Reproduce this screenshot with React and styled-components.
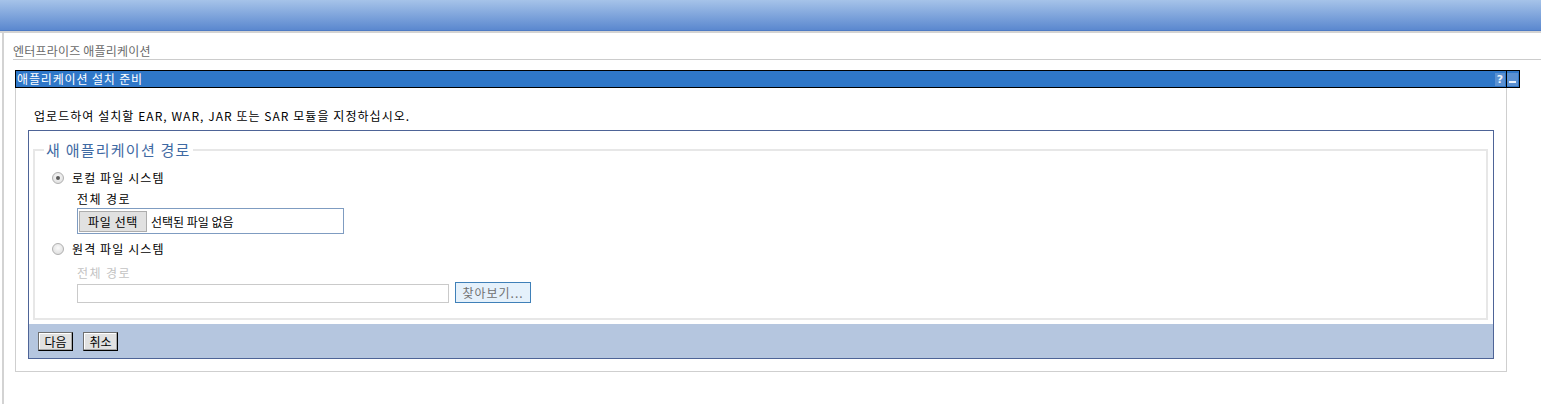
import React from "react";
import styled, { createGlobalStyle } from "styled-components";

const GlobalStyle = createGlobalStyle`
  html, body { margin: 0; padding: 0; background: #fff; }
  body {
    font-family: "Noto Sans CJK KR", "Noto Sans", sans-serif;
    font-size: 12px;
    color: #000;
  }
  * { box-sizing: border-box; }
`;

const TopBar = styled.div`
  height: 31px;
  background: linear-gradient(#a6c3e9, #5b88cf);
  border-bottom: 1px solid #4e7bc4;
`;

const Body = styled.div`
  display: flex;
  border-top: 2px solid #d3d3d3;
  min-height: calc(100vh - 31px);
`;

const LeftRail = styled.div`
  width: 2px;
  margin-left: 2px;
  background: #d3d3d3;
`;

const Main = styled.div`
  flex: 1;
  padding-left: 9px;
`;

const Breadcrumb = styled.div`
  margin-top: 10px;
  line-height: 16px;
  color: #6a6a6a;
  letter-spacing: 0.2px;
  border-bottom: 1px solid #cccccc;
`;

const Portlet = styled.div`
  margin: 10px 0 0 2px;
  width: 1505px;
`;

const TitleBar = styled.div`
  height: 18px;
  border: 1px solid #000;
  background: #2f77c8;
  display: flex;
  align-items: stretch;
`;

const Title = styled.div`
  flex: 1;
  color: #fff;
  line-height: 16px;
  padding-left: 1px;
  letter-spacing: 0.85px;
`;

const TitleIcons = styled.div`
  display: flex;
  align-items: center;
  padding-right: 1px;
`;

const IconBox = styled.div`
  width: ${(p) => p.$w}px;
  height: 13px;
  background: #5a90d1;
  color: #eaf2fb;
  font: bold 11px/13px "DejaVu Sans", sans-serif;
  text-align: center;
  position: relative;
`;

const Dash = styled.span`
  position: absolute;
  left: 2px;
  right: 2px;
  bottom: 3px;
  height: 2px;
  background: #eaf2fb;
`;

const Separator = styled.div`
  align-self: stretch;
  width: 1px;
  background: #000;
  margin-left: 1px;
`;

const Panel = styled.div`
  width: 1492px;
  border: 1px solid #cfcfcf;
  border-top: none;
  padding: 20px 12px 12px;
`;

const Instruction = styled.div`
  line-height: 16px;
  padding-left: 6px;
  margin-bottom: 6px;
  letter-spacing: 1.05px;
`;

const BlueBox = styled.div`
  border: 1px solid #4e6497;
`;

const Fieldset = styled.fieldset`
  margin: 9px 5px 4px 4px;
  padding: 10px 0 15px;
  border: 2px solid #e7e7e7;
  min-width: 0;
`;

const Legend = styled.legend`
  margin-left: 9px;
  padding: 0 2px;
  font-size: 15px;
  line-height: 20px;
  letter-spacing: 1.25px;
  color: #3f6aa3;
`;

const RadioRow = styled.div`
  display: flex;
  align-items: center;
  height: 16px;
  padding-left: 17px;
  gap: 8px;
  margin-top: ${(p) => p.$mt || 0}px;
  line-height: 16px;
  letter-spacing: 1.1px;
`;

const Radio = styled.span`
  width: 12px;
  height: 12px;
  border-radius: 50%;
  border: 1px solid #b0b0b0;
  background: radial-gradient(circle at 50% 40%, #fafafa, #d8d8d8);
  display: flex;
  align-items: center;
  justify-content: center;
  &::after {
    content: "";
    display: ${(p) => (p.$checked ? "block" : "none")};
    width: 4px;
    height: 4px;
    border-radius: 50%;
    background: #5a5a5a;
  }
`;

const FieldLabel = styled.div`
  padding-left: 42px;
  line-height: 16px;
  letter-spacing: 1.4px;
  margin-top: ${(p) => p.$mt}px;
  color: ${(p) => (p.$disabled ? "#c3c3c3" : "#000")};
`;

const FileBox = styled.div`
  margin: 1px 0 0 42px;
  width: 267px;
  height: 26px;
  border: 1px solid #7f9cc1;
  display: flex;
  align-items: center;
  gap: 4px;
  padding-left: 1px;
`;

const FileButton = styled.div`
  width: 68px;
  height: 21px;
  background: #e1e1e1;
  border: 1px solid #adadad;
  line-height: 19px;
  letter-spacing: 0.6px;
  text-align: center;
`;

const InputRow = styled.div`
  display: flex;
  align-items: flex-end;
  gap: 6px;
  margin: 1px 0 0 42px;
`;

const TextInput = styled.div`
  width: 372px;
  height: 19px;
  border: 1px solid #cacaca;
  background: #fff;
`;

const BrowseButton = styled.div`
  width: 76px;
  height: 21px;
  background: #e5f1fb;
  border: 1px solid #3f80b8;
  color: #707070;
  line-height: 19px;
  letter-spacing: 1px;
  text-align: center;
`;

const Footer = styled.div`
  height: 34px;
  background: #b5c6df;
  display: flex;
  align-items: flex-start;
  gap: 10px;
  padding: 8px 0 0 9px;
`;

const FooterButton = styled.div`
  width: 35px;
  height: 19px;
  background: #e1e1e1;
  border: 1px solid #6f6f6f;
  border-right-color: #000;
  border-bottom-color: #000;
  box-shadow: inset -1px -1px 0 #a8a8a8, inset 1px 1px 0 #fff;
  line-height: 17px;
  text-align: center;
`;

export default function App() {
  return (
    <>
      <GlobalStyle />
      <TopBar />
      <Body>
        <LeftRail />
        <Main>
          <Breadcrumb>엔터프라이즈 애플리케이션</Breadcrumb>
          <Portlet>
            <TitleBar>
              <Title>애플리케이션 설치 준비</Title>
              <TitleIcons>
                <IconBox $w={10}>?</IconBox>
                <Separator />
                <IconBox $w={11}>
                  <Dash />
                </IconBox>
              </TitleIcons>
            </TitleBar>
            <Panel>
              <Instruction>
                업로드하여 설치할 EAR, WAR, JAR 또는 SAR 모듈을 지정하십시오.
              </Instruction>
              <BlueBox>
                <Fieldset>
                  <Legend>새 애플리케이션 경로</Legend>
                  <RadioRow>
                    <Radio $checked />
                    <span>로컬 파일 시스템</span>
                  </RadioRow>
                  <FieldLabel $mt={5}>전체 경로</FieldLabel>
                  <FileBox>
                    <FileButton>파일 선택</FileButton>
                    <span>선택된 파일 없음</span>
                  </FileBox>
                  <RadioRow $mt={7}>
                    <Radio />
                    <span>원격 파일 시스템</span>
                  </RadioRow>
                  <FieldLabel $mt={8} $disabled>
                    전체 경로
                  </FieldLabel>
                  <InputRow>
                    <TextInput />
                    <BrowseButton>찾아보기...</BrowseButton>
                  </InputRow>
                </Fieldset>
                <Footer>
                  <FooterButton>다음</FooterButton>
                  <FooterButton>취소</FooterButton>
                </Footer>
              </BlueBox>
            </Panel>
          </Portlet>
        </Main>
      </Body>
    </>
  );
}
